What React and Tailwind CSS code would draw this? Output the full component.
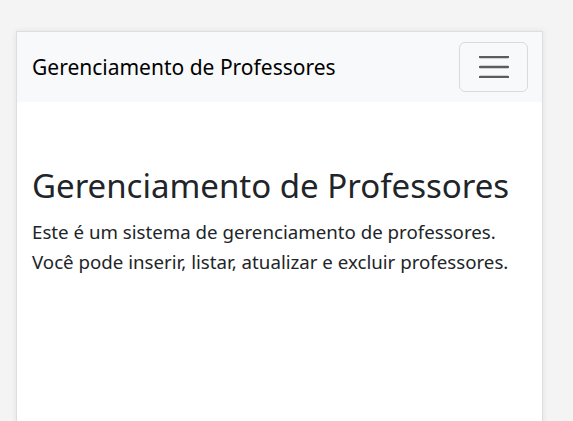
export default function App() {
  return (
    <div className="min-h-screen bg-[#f4f4f4] pt-[31px] pl-4" style={{ fontFamily: '"Noto Sans", sans-serif' }}>
      <div className="w-[527px] h-[400px] bg-white border border-[#dedede] shadow-[0_0_6px_rgba(0,0,0,0.08)] text-[#212529]">
        {/* Navbar */}
        <nav className="h-[70px] bg-[#f8f9fa] flex items-center justify-between pl-[15px] pr-[14px]">
          <span className="text-[21px] leading-none text-black">Gerenciamento de Professores</span>
          <button className="w-[69px] h-[50px] rounded-[6px] border border-[#d9dadb] flex items-center justify-center">
            <svg width="30" height="22" viewBox="0 0 30 22">
              <path d="M1 1h28M1 11h28M1 21h28" stroke="#5a5c5e" strokeWidth="2.5" strokeLinecap="round" />
            </svg>
          </button>
        </nav>
        {/* Content */}
        <main className="px-[15px] pt-[64px]">
          <h1 className="text-[33px] leading-[1.2] mb-[11px]">Gerenciamento de Professores</h1>
          <p className="text-[18.7px] leading-[30px]">
            Este é um sistema de gerenciamento de professores.
            <br />
            Você pode inserir, listar, atualizar e excluir professores.
          </p>
        </main>
      </div>
    </div>
  )
}
